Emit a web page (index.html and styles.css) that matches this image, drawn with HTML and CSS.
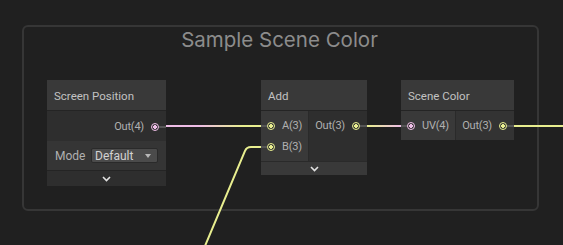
FILE: index.html
```html
<!DOCTYPE html>
<html lang="en">
<head>
  <meta charset="UTF-8">
  <title>Shader Graph - Sample Scene Color</title>
  <link rel="stylesheet" href="styles.css">
</head>
<body>
  <div class="graph">
    <div class="group">
      <div class="group-title">Sample Scene Color</div>
    </div>

    <!-- wires -->
    <svg class="wires" width="563" height="245" viewBox="0 0 563 245">
      <defs>
        <linearGradient id="w1" gradientUnits="userSpaceOnUse" x1="166" y1="0" x2="261" y2="0">
          <stop offset="0" stop-color="#eebde6"/>
          <stop offset="0.35" stop-color="#eebde6"/>
          <stop offset="0.8" stop-color="#e8ee8f"/>
          <stop offset="1" stop-color="#e8ee8f"/>
        </linearGradient>
        <linearGradient id="w2" gradientUnits="userSpaceOnUse" x1="367" y1="0" x2="401" y2="0">
          <stop offset="0" stop-color="#e8ee8f"/>
          <stop offset="1" stop-color="#eebde6"/>
        </linearGradient>
      </defs>
      <line x1="166" y1="126" x2="261" y2="126" stroke="url(#w1)" stroke-width="2"/>
      <line x1="367" y1="126" x2="401" y2="126" stroke="url(#w2)" stroke-width="2"/>
      <line x1="514" y1="126" x2="563" y2="126" stroke="#e8ee8f" stroke-width="2"/>
      <path d="M261 147 L251 147 Q246.5 147 245 151 L205 246" fill="none" stroke="#e8ee8f" stroke-width="2"/>
    </svg>

    <!-- Screen Position -->
    <div class="node node-screen">
      <div class="node-title">Screen Position</div>
      <div class="out-row">
        <div class="port-row out">
          <span class="label">Out(4)</span>
          <span class="port vec4"></span>
          <span class="stub"></span>
        </div>
      </div>
      <div class="mode-row">
        <span class="label">Mode</span>
        <div class="dropdown">
          <span>Default</span>
          <span class="caret"></span>
        </div>
      </div>
      <div class="collapse">
        <svg width="9" height="6" viewBox="0 0 9 6"><polyline points="1,1 4.5,4.5 8,1" fill="none" stroke="#e2e2e2" stroke-width="1.6"/></svg>
      </div>
    </div>

    <!-- Add -->
    <div class="node node-add">
      <div class="node-title">Add</div>
      <div class="ports">
        <div class="inputs">
          <div class="port-row">
            <span class="stub"></span>
            <span class="port vec3"></span>
            <span class="label">A(3)</span>
          </div>
          <div class="port-row">
            <span class="stub"></span>
            <span class="port vec3"></span>
            <span class="label">B(3)</span>
          </div>
        </div>
        <div class="outputs">
          <div class="port-row out">
            <span class="label">Out(3)</span>
            <span class="port vec3"></span>
            <span class="stub"></span>
          </div>
        </div>
      </div>
      <div class="collapse light">
        <svg width="9" height="6" viewBox="0 0 9 6"><polyline points="1,1 4.5,4.5 8,1" fill="none" stroke="#e2e2e2" stroke-width="1.6"/></svg>
      </div>
    </div>

    <!-- Scene Color -->
    <div class="node node-scene">
      <div class="node-title">Scene Color</div>
      <div class="ports">
        <div class="inputs">
          <div class="port-row">
            <span class="stub"></span>
            <span class="port vec4"></span>
            <span class="label">UV(4)</span>
          </div>
        </div>
        <div class="outputs">
          <div class="port-row out">
            <span class="label">Out(3)</span>
            <span class="port vec3"></span>
            <span class="stub"></span>
          </div>
        </div>
      </div>
    </div>
  </div>
</body>
</html>
```

FILE: styles.css
```css
body {
  margin: 0;
  background: #202020;
  font-family: 'Roboto', 'Liberation Sans', sans-serif;
}
.graph {
  position: relative;
  width: 563px;
  height: 245px;
  overflow: hidden;
  background: #202020;
}
.group {
  position: absolute;
  left: 22px;
  top: 25px;
  width: 517px;
  height: 186px;
  box-sizing: border-box;
  border: 2px solid #363636;
  border-radius: 6px;
}
.group-title {
  margin-top: 1px;
  padding-right: 2px;
  text-align: center;
  font-family: 'Inter', sans-serif;
  font-size: 20.5px;
  line-height: 24px;
  color: #8c8c8c;
}
.wires {
  position: absolute;
  left: 0;
  top: 0;
}
.node {
  position: absolute;
  top: 80px;
  display: flex;
  flex-direction: column;
  background: #2e2e2e;
}
.node-screen { left: 47px; width: 119px; }
.node-add { left: 261px; width: 106px; }
.node-scene { left: 401px; width: 113px; }
.node-title {
  height: 31px;
  box-sizing: border-box;
  padding: 1px 7px 0;
  display: flex;
  align-items: center;
  background: #393939;
  border-bottom: 1px solid #242424;
  font-size: 11.5px;
  color: #c2c2c2;
}
.label {
  font-size: 11px;
  letter-spacing: -0.2px;
  color: #b0b0b0;
  white-space: nowrap;
}
.port-row {
  height: 21px;
  display: flex;
  align-items: center;
}
.port-row .label { margin-left: 7px; }
.port-row.out { justify-content: flex-end; }
.port-row.out .label { margin-left: 0; margin-right: 7px; }
.stub {
  width: 6px;
  height: 2px;
  background: #555;
}
.port-row.out .stub { width: 7px; }
.port {
  width: 8px;
  height: 8px;
  box-sizing: border-box;
  border-radius: 50%;
  border: 1.5px solid;
}
.port.vec3 {
  border-color: #e8ee8f;
  background: radial-gradient(circle, #e8ee8f 0 1.6px, #353535 2px);
}
.port.vec4 {
  border-color: #eebde6;
  background: radial-gradient(circle, #eebde6 0 1.6px, #353535 2px);
}
.out-row {
  height: 30px;
  display: flex;
  flex-direction: column;
  justify-content: center;
  padding-top: 1px;
  box-sizing: border-box;
}
.mode-row {
  height: 30px;
  box-sizing: border-box;
  padding: 0 8px;
  display: flex;
  align-items: center;
  background: #353535;
  border-bottom: 1px solid #242424;
}
.mode-row .label { font-size: 12px; letter-spacing: 0; }
.dropdown {
  width: 67px;
  height: 15px;
  margin-left: auto;
  box-sizing: border-box;
  padding: 0 6px 0 3px;
  display: flex;
  align-items: center;
  justify-content: space-between;
  background: #4b4b4b;
  border: 1px solid #2a2a2a;
  border-radius: 2px;
  font-size: 12px;
  color: #d2d2d2;
}
.caret {
  width: 0;
  height: 0;
  border-left: 3.5px solid transparent;
  border-right: 3.5px solid transparent;
  border-top: 4px solid #b8b8b8;
}
.collapse {
  height: 15px;
  display: flex;
  align-items: center;
  justify-content: center;
  background: #2e2e2e;
}
.collapse.light {
  height: 14px;
  background: #393939;
  border-top: 1px solid #2a2a2a;
  box-sizing: border-box;
}
.ports {
  display: flex;
}
.node-add .ports { height: 50px; }
.node-scene .ports { height: 29px; }
.inputs {
  padding-top: 4px;
  box-sizing: border-box;
  background: #393939;
  border-right: 1px solid #2a2a2a;
}
.node-add .inputs { width: 48px; }
.node-scene .inputs { width: 55px; }
.outputs {
  flex: 1;
  padding-top: 4px;
  box-sizing: border-box;
  background: #2e2e2e;
}
.node-scene .outputs { background: #333; }
```
